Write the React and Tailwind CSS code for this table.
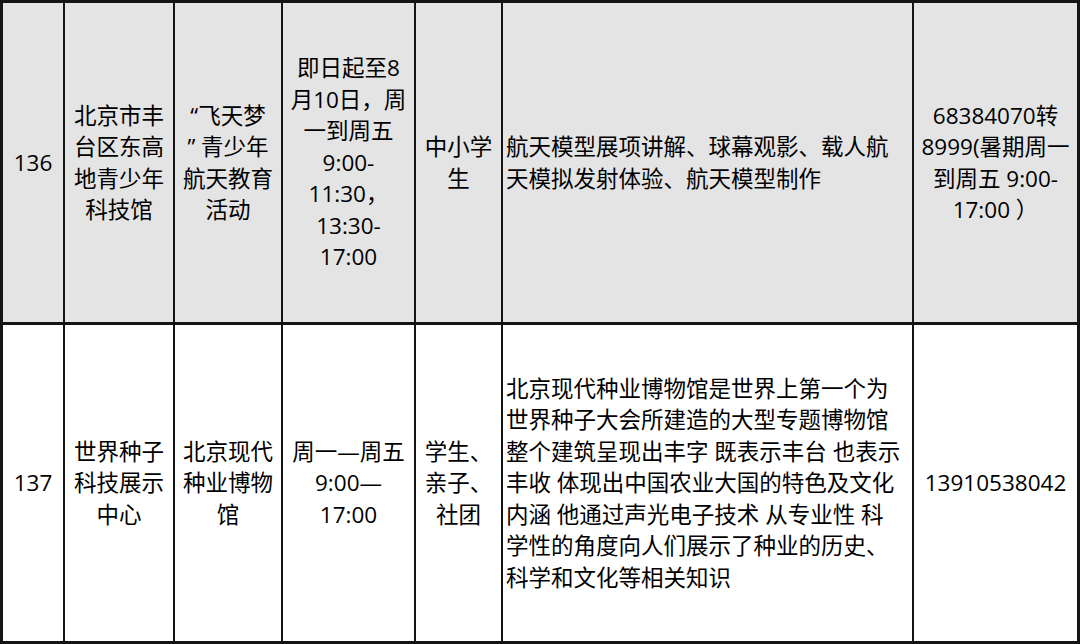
const rows = [
  {
    bg: "bg-[#e4e4e4]",
    cells: [
      ["136"],
      ["北京市丰", "台区东高", "地青少年", "科技馆"],
      ["“飞天梦", "” 青少年", "航天教育", "活动"],
      ["即日起至8", "月10日，周", "一到周五", "9:00-", "11:30，", "13:30-", "17:00"],
      ["中小学", "生"],
      ["航天模型展项讲解、球幕观影、载人航", "天模拟发射体验、航天模型制作"],
      ["68384070转", "8999(暑期周一", "到周五 9:00-", "17:00 ）"],
    ],
  },
  {
    bg: "bg-white",
    cells: [
      ["137"],
      ["世界种子", "科技展示", "中心"],
      ["北京现代", "种业博物", "馆"],
      ["周一—周五", "9:00—", "17:00"],
      ["学生、", "亲子、", "社团"],
      [
        "北京现代种业博物馆是世界上第一个为",
        "世界种子大会所建造的大型专题博物馆",
        "整个建筑呈现出丰字 既表示丰台 也表示",
        "丰收 体现出中国农业大国的特色及文化",
        "内涵 他通过声光电子技术 从专业性 科",
        "学性的角度向人们展示了种业的历史、",
        "科学和文化等相关知识",
      ],
      ["13910538042"],
    ],
  },
];

const Cell = ({ lines, bg, left }) => (
  <div
    className={`${bg} flex items-center ${
      left ? "justify-start pl-[3px] text-left" : "justify-center text-center"
    }`}
  >
    <div className="whitespace-pre">
      {lines.map((l, i) => (
        <div key={i}>{l}</div>
      ))}
    </div>
  </div>
);

export default function App() {
  return (
    <div className="w-[1080px] h-[644px] border-[3px] border-[#141414] bg-[#141414] font-['Open_Sans','Noto_Sans_CJK_SC',sans-serif] text-[22.5px] leading-[31.5px] text-black">
      <div className="grid h-full grid-cols-[60px_108px_106px_131px_85px_409px_1fr] grid-rows-[319px_1fr] gap-x-[2px] gap-y-[3px]">
        {rows.map((row) =>
          row.cells.map((lines, i) => (
            <Cell key={row.cells[0][0] + i} lines={lines} bg={row.bg} left={i === 5} />
          ))
        )}
      </div>
    </div>
  );
}
